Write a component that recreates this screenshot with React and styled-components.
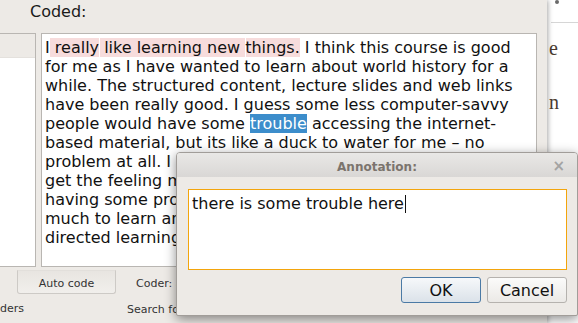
import React from 'react'
import styled, { createGlobalStyle } from 'styled-components'

const GlobalStyle = createGlobalStyle`
  body {
    margin: 0;
    overflow: hidden;
    font-family: "DejaVu Sans", "Noto Sans", sans-serif;
  }
`

const Screen = styled.div`
  display: flex;
  width: 578px;
  height: 323px;
  position: relative;
  overflow: hidden;
  background: #fff;
`

const MainWindow = styled.div`
  width: 547px;
  flex: none;
  display: flex;
  flex-direction: column;
  background: #edeae6;
  box-shadow: 1px 0 5px rgba(0, 0, 0, 0.35);
  position: relative;
  z-index: 1;
`

const Header = styled.div`
  height: 33px;
  box-sizing: border-box;
  padding: 2px 0 0 30px;
  font-size: 16px;
  line-height: 19px;
  color: #1a1a1a;
`

const Workspace = styled.div`
  display: flex;
  gap: 5px;
  height: 234px;
  padding-right: 10px;
`

const SidePanel = styled.div`
  width: 36px;
  box-sizing: border-box;
  display: flex;
  flex-direction: column;
  background: #fff;
  border: 1px solid #b9b6b2;
  border-left: none;
`

const SideHeader = styled.div`
  height: 23px;
  background: #edeae6;
  border-bottom: 1px solid #e4e1dd;
`

const Editor = styled.div`
  flex: 1;
  background: #fff;
  border: 1px solid #b9b6b2;
  padding: 4px 3px;
  font-size: 16px;
  line-height: 19px;
  color: #111;
  white-space: nowrap;
  overflow: hidden;
`

const Line = styled.div``

const Coded = styled.span`
  background: #f7dcdc;
  box-shadow: ${p => (p.$split ? 'inset 1px 0 #fff' : 'none')};
`

const Selected = styled.span`
  background: #3c8dcb;
  color: #fff;
`

const Footer = styled.div`
  flex: 1;
  display: flex;
  flex-direction: column;
  font-size: 11px;
  color: #333;
`

const FooterRow = styled.div`
  display: flex;
  align-items: flex-start;
  gap: ${p => p.$gap || 0}px;
  padding: ${p => p.$pad};
`

const ToolButton = styled.div`
  width: 99px;
  height: 24px;
  box-sizing: border-box;
  display: flex;
  align-items: center;
  justify-content: center;
  padding-top: 3px;
  border: 1px solid #cdcac6;
  border-top-color: #e2dfdb;
  border-radius: 0 0 3px 3px;
  background: linear-gradient(#e8e5e1, #f1efec);
`

const FooterLabel = styled.span`
  display: block;
  width: ${p => (p.$width ? `${p.$width}px` : 'auto')};
  margin-top: ${p => p.$top || 0}px;
`

const Dialog = styled.div`
  position: absolute;
  left: 176px;
  top: 152px;
  width: 402px;
  height: 164px;
  box-sizing: border-box;
  display: flex;
  flex-direction: column;
  background: #edeae6;
  border: 1px solid #a19d99;
  border-radius: 4px 4px 2px 2px;
  box-shadow: 0 3px 12px rgba(0, 0, 0, 0.45);
  z-index: 2;
`

const TitleBar = styled.div`
  height: 24px;
  box-sizing: border-box;
  position: relative;
  display: flex;
  align-items: center;
  justify-content: center;
  padding-top: 3px;
  border-radius: 3px 3px 0 0;
  background: linear-gradient(#e9e8e6, #d9d7d5);
  font-size: 12px;
  font-weight: bold;
  color: #7b746d;
`

const CloseButton = styled.span`
  position: absolute;
  right: 12px;
  top: 4px;
  font-size: 15px;
  font-weight: bold;
  color: #a3a3a3;
`

const DialogBody = styled.div`
  flex: 1;
  display: flex;
  flex-direction: column;
  gap: 7px;
  padding: 12px 10px 0 11px;
`

const NoteBox = styled.div`
  height: 81px;
  box-sizing: border-box;
  padding: 4px 3px;
  background: #fff;
  border: 1px solid #f3a50c;
  font-size: 16px;
  line-height: 19px;
  color: #111;
`

const Caret = styled.span`
  display: inline-block;
  width: 1px;
  height: 18px;
  margin-left: 1px;
  vertical-align: -4px;
  background: #111;
`

const ButtonRow = styled.div`
  display: flex;
  justify-content: flex-end;
  gap: 6px;
`

const DialogButton = styled.div`
  width: 80px;
  height: 26px;
  box-sizing: border-box;
  display: flex;
  align-items: center;
  justify-content: center;
  border-radius: 3px;
  font-size: 16px;
  color: #111;
  border: 1px solid ${p => (p.$primary ? '#4b7aa5' : '#b5b2ae')};
  background: ${p => (p.$primary
    ? 'linear-gradient(#f6f8fa, #dbe2e9)'
    : 'linear-gradient(#fbfbfa, #ebe9e6)')};
`

const RightWindow = styled.div`
  flex: 1;
  background: #fff;
  padding-left: 2px;
`

const BulletRow = styled.div`
  height: 22px;
  border-bottom: 1px solid #d6d6d6;
  margin-left: 2px;
  padding-left: 4px;
`

const Bullet = styled.span`
  display: block;
  width: 4px;
  height: 4px;
  border-radius: 50%;
  background: #6a6a6a;
`

const DocText = styled.div`
  margin-top: 12px;
  font-family: "Liberation Serif", serif;
  font-size: 20px;
  line-height: 27px;
  color: #4a3b30;
  white-space: pre;
`

const App = () => (
  <Screen>
    <GlobalStyle />
    <MainWindow>
      <Header>Coded:</Header>
      <Workspace>
        <SidePanel>
          <SideHeader />
        </SidePanel>
        <Editor>
          <Line>
            I<Coded> really</Coded><Coded $split> like learning new </Coded><Coded $split>things.</Coded> I think this course is good
          </Line>
          <Line>for me as I have wanted to learn about world history for a</Line>
          <Line>while. The structured content, lecture slides and web links</Line>
          <Line>have been really good. I guess some less computer-savvy</Line>
          <Line>
            people would have some <Selected>trouble</Selected> accessing the internet-
          </Line>
          <Line>based material, but its like a duck to water for me – no</Line>
          <Line>problem at all. I know from the forum that others are</Line>
          <Line>get the feeling most people are fine, but some are</Line>
          <Line>having some problems with it. Overall there is so</Line>
          <Line>much to learn and I am really enjoying the self-</Line>
          <Line>directed learning.</Line>
        </Editor>
      </Workspace>
      <Footer>
        <FooterRow $gap={20} $pad="3px 0 0 17px">
          <ToolButton>Auto code</ToolButton>
          <FooterLabel $top={7}>Coder: admin</FooterLabel>
        </FooterRow>
        <FooterRow $pad="8px 0 0 0">
          <FooterLabel $width={127}>ders</FooterLabel>
          <FooterLabel $top={1}>Search for</FooterLabel>
        </FooterRow>
      </Footer>
    </MainWindow>
    <RightWindow>
      <BulletRow>
        <Bullet />
      </BulletRow>
      <DocText>{'e\n\nn'}</DocText>
    </RightWindow>
    <Dialog>
      <TitleBar>
        Annotation:
        <CloseButton>×</CloseButton>
      </TitleBar>
      <DialogBody>
        <NoteBox>
          there is some trouble here<Caret />
        </NoteBox>
        <ButtonRow>
          <DialogButton $primary>OK</DialogButton>
          <DialogButton>Cancel</DialogButton>
        </ButtonRow>
      </DialogBody>
    </Dialog>
  </Screen>
)

export default App
